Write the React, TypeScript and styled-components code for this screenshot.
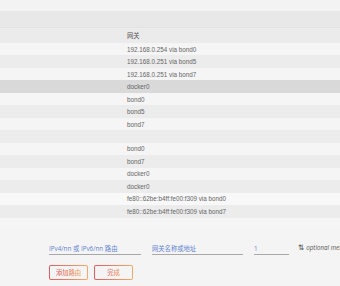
import React from "react";
import styled, { createGlobalStyle } from "styled-components";

const Global = createGlobalStyle`
  html, body { margin: 0; padding: 0; background: #f4f4f4; overflow: hidden; }
  body { width: 340px; height: 286px; font-family: "Liberation Sans", Arial, sans-serif; }
`;

const Page = styled.div`
  width: 340px;
  height: 286px;
  display: flex;
  flex-direction: column;
  background: #f4f4f4;
  overflow: hidden;
`;

const TopBand = styled.div`
  height: 11px;
  background: #f3f3f3;
`;

const GreyBand = styled.div`
  height: 17px;
  background: #e8e8e8;
  border-bottom: 1px solid #e2e2e2;
  box-sizing: border-box;
`;

const Table = styled.div`
  display: flex;
  flex-direction: column;
`;

const HeaderRow = styled.div`
  height: 15px;
  background: #ebebeb;
  display: flex;
  align-items: center;
  padding-left: 127px;
  font-size: 6.3px;
  color: #555;
  font-family: "Liberation Sans", "Noto Sans CJK SC", sans-serif;
`;

type Tone = "light" | "dark" | "hover" | "white";
const toneBg: Record<Tone, string> = {
  light: "#f5f5f5",
  dark: "#ececec",
  hover: "#d9d9d9",
  white: "#f8f8f8",
};

const Row = styled.div<{ $tone: Tone }>`
  height: 12.47px;
  display: flex;
  align-items: center;
  padding-left: 127px;
  background: ${(p) => toneBg[p.$tone]};
  font-size: 6.3px;
  color: #666;
  white-space: nowrap;
`;

const FormArea = styled.div`
  display: flex;
  flex-direction: column;
  padding: 12px 0 0 49px;
`;

const Inputs = styled.div`
  display: flex;
  align-items: flex-end;
`;

const Field = styled.div<{ $w: number; $gap: number }>`
  width: ${(p) => p.$w}px;
  margin-right: ${(p) => p.$gap}px;
  height: 11px;
  border-bottom: 1.5px solid #a9a9a9;
  display: flex;
  align-items: center;
  font-family: "Open Sans", "Noto Sans CJK SC", sans-serif;
  font-size: 6.3px;
  color: #6283d2;
  white-space: nowrap;
  flex-shrink: 0;
`;

const Hint = styled.div`
  height: 11px;
  display: flex;
  align-items: center;
  margin-bottom: 1.5px;
  font-family: "Open Sans", sans-serif;
  font-style: italic;
  font-size: 6.2px;
  color: #555;
  white-space: nowrap;
  gap: 2px;
`;

const SortGlyph = styled.span`
  font-family: "DejaVu Sans", sans-serif;
  font-style: normal;
  font-size: 7.5px;
  color: #444;
`;

const Buttons = styled.div`
  display: flex;
  gap: 6px;
  margin-top: 10px;
`;

const Button = styled.button`
  width: 39px;
  height: 15px;
  padding: 0;
  box-sizing: border-box;
  border: 1px solid transparent;
  border-radius: 2px;
  background: linear-gradient(#f4f4f4, #f4f4f4) padding-box,
    linear-gradient(90deg, #e65a5c, #f2ab6c) border-box;
  display: flex;
  align-items: center;
  justify-content: center;
  cursor: pointer;
`;

const ButtonText = styled.span`
  font-family: "Noto Sans CJK SC", sans-serif;
  font-size: 6.3px;
  font-weight: 500;
  background: linear-gradient(90deg, #e65a5c, #f2a060);
  -webkit-background-clip: text;
  background-clip: text;
  color: transparent;
`;

const rows: { text: string; tone: Tone }[] = [
  { text: "192.168.0.254 via bond0", tone: "light" },
  { text: "192.168.0.251 via bond5", tone: "dark" },
  { text: "192.168.0.251 via bond7", tone: "light" },
  { text: "docker0", tone: "hover" },
  { text: "bond0", tone: "light" },
  { text: "bond5", tone: "dark" },
  { text: "bond7", tone: "light" },
  { text: "", tone: "dark" },
  { text: "bond0", tone: "light" },
  { text: "bond7", tone: "dark" },
  { text: "docker0", tone: "light" },
  { text: "docker0", tone: "dark" },
  { text: "fe80::62be:b4ff:fe00:f309 via bond0", tone: "white" },
  { text: "fe80::62be:b4ff:fe00:f309 via bond7", tone: "dark" },
  { text: "", tone: "light" },
];

export default function App() {
  return (
    <>
      <Global />
      <Page>
        <TopBand />
        <GreyBand />
        <Table>
          <HeaderRow>网关</HeaderRow>
          {rows.map((r, i) => (
            <Row key={i} $tone={r.tone}>
              {r.text}
            </Row>
          ))}
        </Table>
        <FormArea>
          <Inputs>
            <Field $w={92} $gap={11}>IPv4/nn 或 IPv6/nn 路由</Field>
            <Field $w={91} $gap={11}>网关名称或地址</Field>
            <Field $w={35} $gap={9}>1</Field>
            <Hint>
              <SortGlyph>⇅</SortGlyph>
              optional metric
            </Hint>
          </Inputs>
          <Buttons>
            <Button>
              <ButtonText>添加路由</ButtonText>
            </Button>
            <Button>
              <ButtonText>完成</ButtonText>
            </Button>
          </Buttons>
        </FormArea>
      </Page>
    </>
  );
}
